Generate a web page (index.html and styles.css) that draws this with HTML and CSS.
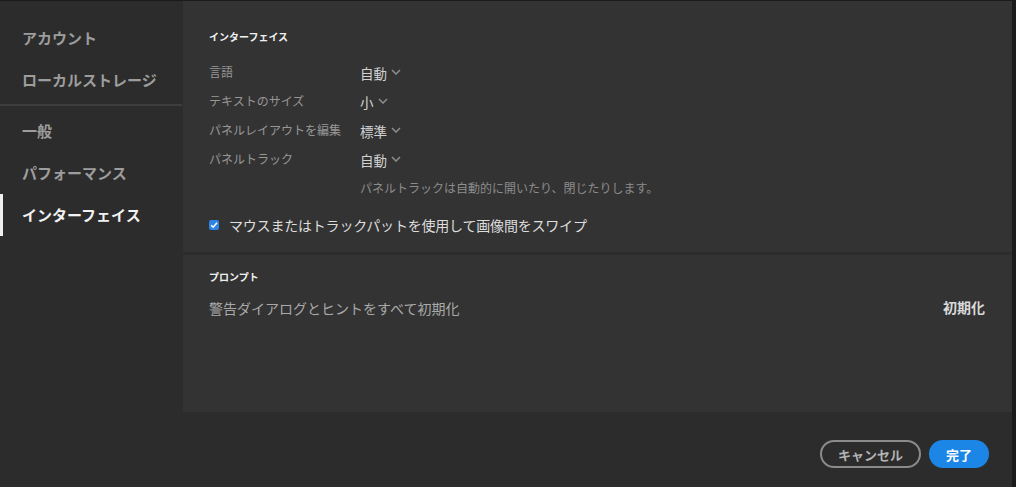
FILE: index.html
```html
<!DOCTYPE html>
<html lang="ja">
<head>
<meta charset="utf-8">
<title>環境設定</title>
<link rel="stylesheet" href="styles.css">
</head>
<body>
<div class="dialog">
  <div class="body-row">
    <nav class="sidebar">
      <div class="nav-group first">
        <div class="nav-item">アカウント</div>
        <div class="nav-item">ローカルストレージ</div>
      </div>
      <div class="nav-divider"></div>
      <div class="nav-group">
        <div class="nav-item">一般</div>
        <div class="nav-item">パフォーマンス</div>
        <div class="nav-item active">インターフェイス</div>
      </div>
    </nav>
    <main class="content">
      <section class="sec sec-interface">
        <h2 class="sec-title">インターフェイス</h2>
        <div class="settings">
          <div class="label">言語</div>
          <div class="value">自動<svg class="chev" viewBox="0 0 10 6" width="10" height="6"><path d="M1 1 L5 5 L9 1" fill="none" stroke="#8e8e8e" stroke-width="1.5"/></svg></div>
          <div class="label">テキストのサイズ</div>
          <div class="value">小<svg class="chev" viewBox="0 0 10 6" width="10" height="6"><path d="M1 1 L5 5 L9 1" fill="none" stroke="#8e8e8e" stroke-width="1.5"/></svg></div>
          <div class="label">パネルレイアウトを編集</div>
          <div class="value">標準<svg class="chev" viewBox="0 0 10 6" width="10" height="6"><path d="M1 1 L5 5 L9 1" fill="none" stroke="#8e8e8e" stroke-width="1.5"/></svg></div>
          <div class="label">パネルトラック</div>
          <div class="value">自動<svg class="chev" viewBox="0 0 10 6" width="10" height="6"><path d="M1 1 L5 5 L9 1" fill="none" stroke="#8e8e8e" stroke-width="1.5"/></svg></div>
        </div>
        <p class="helper">パネルトラックは自動的に開いたり、閉じたりします。</p>
        <label class="check-row">
          <span class="checkbox"><svg viewBox="0 0 10 10" width="10" height="10"><path d="M2.2 5.2 L4.2 7.2 L8 2.8" fill="none" stroke="#ffffff" stroke-width="1.6"/></svg></span>
          <span class="check-label">マウスまたはトラックパットを使用して画像間をスワイプ</span>
        </label>
      </section>
      <section class="sec sec-prompt">
        <h2 class="sec-title">プロンプト</h2>
        <div class="prompt-row">
          <span class="prompt-text">警告ダイアログとヒントをすべて初期化</span>
          <span class="prompt-action">初期化</span>
        </div>
      </section>
    </main>
  </div>
  <footer class="footer">
    <button class="btn btn-cancel">キャンセル</button>
    <button class="btn btn-done">完了</button>
  </footer>
</div>
</body>
</html>
```

FILE: styles.css
```css
html, body {
  margin: 0;
  padding: 0;
  background: #1b1b1b;
  height: 100%;
  overflow: hidden;
}
body {
  font-family: "Noto Sans CJK JP", "Noto Sans", sans-serif;
}
.dialog {
  width: 1012px;
  margin-top: 1px;
  height: 486px;
  background: #2c2c2c;
  display: flex;
  flex-direction: column;
}
.body-row {
  display: flex;
  height: 411px;
}
.sidebar {
  width: 183px;
  flex: none;
  background: #2c2c2c;
}
.nav-group.first {
  padding-top: 16px;
}
.nav-item {
  height: 42px;
  line-height: 42px;
  padding-left: 22px;
  font-size: 15px;
  font-weight: 700;
  color: #9d9d9d;
  position: relative;
}
.nav-item.active {
  color: #f2f2f2;
}
.nav-item.active::before {
  content: "";
  position: absolute;
  left: 0;
  top: 0;
  bottom: 0;
  width: 3px;
  background: #f0f0f0;
}
.nav-divider {
  height: 2px;
  width: 182px;
  background: #3d3d3d;
  margin: 3px 0 4px;
}
.content {
  flex: 1;
  display: flex;
  flex-direction: column;
  gap: 3px;
}
.sec {
  background: #333333;
  padding: 0 27px 0 26px;
}
.sec-interface {
  height: 251px;
}
.sec-prompt {
  flex: 1;
}
.sec-title {
  margin: 0;
  font-size: 10px;
  line-height: 14px;
  font-weight: 700;
  color: #f0f0f0;
}
.sec-interface .sec-title {
  padding-top: 29px;
}
.sec-prompt .sec-title {
  padding-top: 15px;
}
.settings {
  display: grid;
  grid-template-columns: 151px auto;
  grid-auto-rows: 29px;
  align-items: center;
  margin-top: 14px;
}
.label {
  font-size: 12px;
  color: #979797;
  line-height: 16px;
  margin-top: -1px;
}
.value {
  font-size: 13.5px;
  color: #d2d2d2;
  line-height: 18px;
  display: flex;
  align-items: center;
  gap: 4px;
}
.chev {
  display: block;
  width: 10px;
  height: 6px;
  margin-top: -1px;
}
.helper {
  margin: 6px 0 0 151px;
  font-size: 12px;
  line-height: 16px;
  color: #8c8c8c;
}
.check-row {
  display: flex;
  align-items: center;
  gap: 10px;
  height: 20px;
  margin-top: 19px;
}
.checkbox {
  width: 10px;
  height: 10px;
  border-radius: 2px;
  background: #2d84e4;
  display: flex;
  align-items: center;
  justify-content: center;
}
.checkbox svg {
  display: block;
}
.check-label {
  font-size: 14px;
  letter-spacing: -0.2px;
  color: #dedede;
  line-height: 20px;
}
.prompt-row {
  display: flex;
  justify-content: space-between;
  align-items: center;
  height: 20px;
  margin-top: 14px;
}
.prompt-text {
  font-size: 14px;
  color: #a9a9a9;
  line-height: 20px;
}
.prompt-action {
  font-size: 14px;
  font-weight: 700;
  color: #d9d9d9;
  line-height: 20px;
  margin-top: -2px;
}
.footer {
  flex: 1;
  display: flex;
  justify-content: flex-end;
  align-items: flex-start;
  gap: 8px;
  padding: 28px 23px 0 0;
  background: #2c2c2c;
}
.btn {
  height: 28px;
  border-radius: 14px;
  font-family: "Noto Sans CJK JP", "Noto Sans", sans-serif;
  font-size: 13px;
  font-weight: 700;
  line-height: 1;
  padding: 0;
  cursor: pointer;
}
.btn-cancel {
  width: 101px;
  background: transparent;
  border: 2px solid #8b8b8b;
  color: #b3b3b3;
}
.btn-done {
  width: 60px;
  background: #1b86e6;
  border: none;
  color: #ffffff;
}
```
